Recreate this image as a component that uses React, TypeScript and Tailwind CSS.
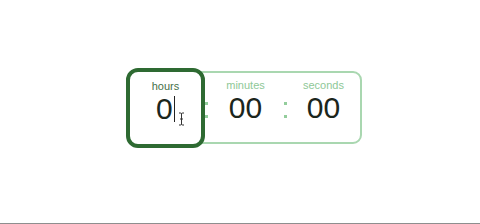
import React from 'react';

function Colon() {
  return (
    <div className="flex h-full w-[3px] shrink-0 flex-col items-center pt-[29px]">
      <span className="block h-[3px] w-[3px] bg-[#93cd9c]" />
      <span className="mt-[10px] block h-[3px] w-[3px] bg-[#93cd9c]" />
    </div>
  );
}

export default function App() {
  return (
    <div className="h-[224px] w-[480px] border-b border-[#8e8e8e] bg-white font-['Liberation_Sans',Arial,sans-serif]">
      <div className="flex pl-[127px] pt-[71px]">
        <div className="flex h-[73px] w-[235px] items-center rounded-[9px] border-2 border-[#a9d7b0]">
          {/* hours, focused */}
          <div className="relative -ml-[3px] flex h-[80px] w-[79px] shrink-0 flex-col items-center rounded-[12px] border-4 border-[#2e6a32] bg-white pt-[7px]">
            <span className="text-[11px] leading-[14px] text-[#456f48]">hours</span>
            <div className="flex items-center">
              <span className="text-[30px] leading-[32px] text-[#1b261c]">0</span>
              <span className="ml-[1px] block h-[26px] w-[1.5px] bg-[#222]" />
            </div>
            <svg className="absolute left-[48px] top-[40px]" width="7" height="14" viewBox="0 0 7 14">
              <path d="M1 1h1.5c.6 0 1 .4 1 1v10c0 .6.4 1 1 1H6M6 1H4.5c-.6 0-1 .4-1 1M3.5 12c0 .6-.4 1-1 1H1M2 7h3" fill="none" stroke="#333" strokeWidth="1" />
            </svg>
          </div>
          <Colon />
          <div className="flex h-full w-[75px] shrink-0 flex-col items-center pt-[5px]">
            <span className="text-[11px] leading-[14px] text-[#8ec897]">minutes</span>
            <span className="text-[30px] leading-[32px] text-[#1b261c]">00</span>
          </div>
          <div className="w-[1px]" />
          <Colon />
          <div className="flex h-full w-[73px] shrink-0 flex-col items-center pt-[5px]">
            <span className="text-[11px] leading-[14px] text-[#8ec897]">seconds</span>
            <span className="text-[30px] leading-[32px] text-[#1b261c]">00</span>
          </div>
        </div>
      </div>
    </div>
  );
}
